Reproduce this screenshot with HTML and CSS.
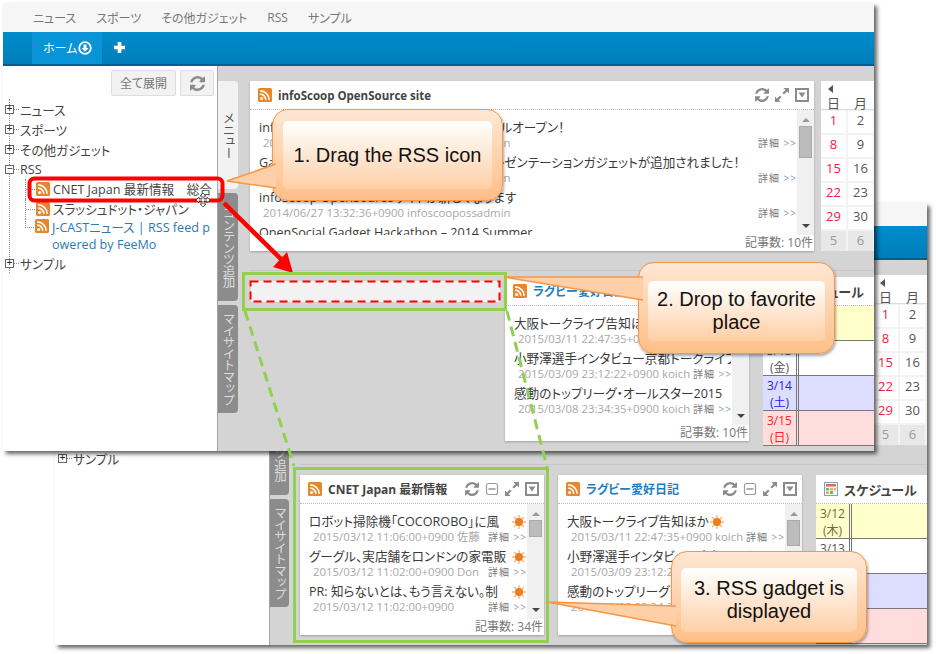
FILE: index.html
```html
<!DOCTYPE html>
<html lang="ja">
<head>
  <meta charset="UTF-8" />
  <title>infoScoop RSS gadget</title>
  <link rel="stylesheet" href="styles.css">
</head>
<body>

  <svg class="defs" aria-hidden="true">
    <symbol id="rss" viewBox="0 0 14 14">
      <rect width="14" height="14" rx="1.5" fill="#e8862e"/>
      <circle cx="3.6" cy="10.4" r="1.5" fill="#fff"/>
      <path d="M2.2 6.2a5.6 5.6 0 0 1 5.6 5.6M2.2 2.9a8.9 8.9 0 0 1 8.9 8.9" fill="none" stroke="#fff" stroke-width="1.7"/>
    </symbol>
    <symbol id="reload" viewBox="0 0 1536 1536">
      <path fill="#8b8b8b" d="M1511 928q0 5-1 7-64 268-268 434.5t-478 166.5q-146 0-282.5-55t-243.5-157l-129 129q-19 19-45 19t-45-19-19-45v-448q0-26 19-45t45-19h448q26 0 45 19t19 45-19 45l-137 137q71 66 161 102t187 36q134 0 250-65t186-179q11-17 53-117 8-23 30-23h192q13 0 22.5 9.5t9.5 22.5zm25-800v448q0 26-19 45t-45 19h-448q-26 0-45-19t-19-45 19-45l138-138q-148-137-349-137-134 0-250 65t-186 179q-11 17-53 117-8 23-30 23h-199q-13 0-22.5-9.5t-9.5-22.5v-7q65-268 270-434.5t480-166.5q146 0 284 55.5t245 156.5l130-129q19-19 45-19t45 19 19 45z"/>
    </symbol>
    <symbol id="expand" viewBox="0 0 14 14">
      <path fill="#8b8b8b" d="M8.4 0H14v5.6l-2-2-3 3-1.600-1.600 3-3zM5.600 14H0V8.400l2 2 3-3 1.600 1.600-3 3z"/>
    </symbol>
    <symbol id="menu" viewBox="0 0 14 14">
      <rect x="1" y="1" width="12" height="12" fill="#fff" stroke="#8b8b8b" stroke-width="2"/>
      <path fill="#8b8b8b" d="M3.500 4.500h7L7 9.500z"/>
    </symbol>
    <symbol id="minimize" viewBox="0 0 13 14">
      <rect x="1" y="1.500" width="11" height="11" rx="2" fill="#fff" stroke="#9a9a9a" stroke-width="1.200"/>
      <path d="M3 7h7" stroke="#8b8b8b" stroke-width="1.400"/>
    </symbol>
    <symbol id="sun" viewBox="0 0 14 14">
      <path d="M7 0v14M0 7h14M2 2l10 10M12 2L2 12" stroke="#f7b27a" stroke-width="1.300"/>
      <circle cx="7" cy="7" r="4" fill="#ee7d1c"/>
    </symbol>
    <symbol id="calendar" viewBox="0 0 14 14">
      <rect x=".5" y=".5" width="13" height="13" fill="#f4f8fc" stroke="#7ba3c9"/>
      <rect x="2" y="2" width="10" height="2.500" fill="#d66"/>
      <path fill="#7fb46a" d="M2 6h3v2.500H2zM6 9h3v3H6z"/>
      <path fill="#e2b34c" d="M6 6h3v2.500H6zM10 6h2v2.500h-2zM2 9.500h3V12H2z"/>
    </symbol>
  </svg>

  <div class="canvas">

    <!-- back window: the gadget after it was dropped -->
    <div class="window window-back">
      <div class="topnav"></div>
      <div class="tabbar"></div>
      <div class="content">
        <div class="side">
          <ul class="tree tree-back">
            <li class="tree-row"><span class="toggle">+</span><span class="dots"></span>サンプル</li>
          </ul>
        </div>
        <div class="tabs tabs-back">
          <div class="tab tab-light">メニュー</div>
          <div class="tab">コンテンツ追加</div>
          <div class="tab">マイサイトマップ</div>
        </div>
        <div class="main main-back">
          <div class="row-upper row-end">
            <div class="cal">
              <div class="cal-nav"><span class="arrow-left"></span></div>
              <div class="cal-head">日</div><div class="cal-head">月</div>
              <div class="cal-day sun-day">1</div><div class="cal-day">2</div>
              <div class="cal-day sun-day">8</div><div class="cal-day">9</div>
              <div class="cal-day sun-day">15</div><div class="cal-day">16</div>
              <div class="cal-day sun-day">22</div><div class="cal-day">23</div>
              <div class="cal-day sun-day">29</div><div class="cal-day">30</div>
              <div class="cal-day cal-off">5</div><div class="cal-day cal-off">6</div>
            </div>
          </div>
          <div class="row-lower row-lower-back">
            <div class="gadget gadget-small">
              <div class="gadget-head">
                <svg class="ico"><use href="#rss"/></svg>
                <span class="gadget-title">CNET Japan 最新情報</span>
                <span class="actions">
                  <svg class="act"><use href="#reload"/></svg>
                  <svg class="act"><use href="#minimize"/></svg>
                  <svg class="act"><use href="#expand"/></svg>
                  <svg class="act"><use href="#menu"/></svg>
                </span>
              </div>
              <div class="gadget-body">
                <div class="items">
                  <div class="item">
                    <div class="item-title"><span class="title-text">ロボット掃除機「COCOROBO」に風</span><svg class="sun"><use href="#sun"/></svg></div>
                    <div class="item-meta"><span class="meta-text">2015/03/12 11:06:00+0900 佐藤</span><span class="more">詳細 <b>&gt;&gt;</b></span></div>
                  </div>
                  <div class="item">
                    <div class="item-title"><span class="title-text">グーグル、実店舗をロンドンの家電販</span><svg class="sun"><use href="#sun"/></svg></div>
                    <div class="item-meta"><span class="meta-text">2015/03/12 11:02:00+0900 Don</span><span class="more">詳細 <b>&gt;&gt;</b></span></div>
                  </div>
                  <div class="item">
                    <div class="item-title"><span class="title-text">PR: 知らないとは、もう言えない。制</span><svg class="sun"><use href="#sun"/></svg></div>
                    <div class="item-meta"><span class="meta-text">2015/03/12 11:02:00+0900</span><span class="more">詳細 <b>&gt;&gt;</b></span></div>
                  </div>
                </div>
                <div class="scroll"><span class="arrow-up"></span><span class="thumb thumb-s"></span><span class="arrow-down"></span></div>
              </div>
              <div class="gadget-foot">記事数: 34件</div>
            </div>
            <div class="gadget gadget-small">
              <div class="gadget-head">
                <svg class="ico"><use href="#rss"/></svg>
                <span class="gadget-title gadget-link">ラグビー愛好日記</span>
                <span class="actions">
                  <svg class="act"><use href="#reload"/></svg>
                  <svg class="act"><use href="#minimize"/></svg>
                  <svg class="act"><use href="#expand"/></svg>
                  <svg class="act"><use href="#menu"/></svg>
                </span>
              </div>
              <div class="gadget-body">
                <div class="items">
                  <div class="item">
                    <div class="item-title"><span>大阪トークライブ告知ほか</span><svg class="sun sun-inline"><use href="#sun"/></svg></div>
                    <div class="item-meta"><span class="meta-text">2015/03/11 22:47:35+0900 koich</span><span class="more">詳細 <b>&gt;&gt;</b></span></div>
                  </div>
                  <div class="item">
                    <div class="item-title"><span class="title-text">小野澤選手インタビュー京都トークライブ</span></div>
                    <div class="item-meta"><span class="meta-text">2015/03/09 23:12:22+0900 koich</span><span class="more">詳細 <b>&gt;&gt;</b></span></div>
                  </div>
                  <div class="item">
                    <div class="item-title"><span class="title-text">感動のトップリーグ・オールスター2015</span></div>
                    <div class="item-meta"><span class="meta-text">2015/03/08 23:34:35+0900 koich</span><span class="more">詳細 <b>&gt;&gt;</b></span></div>
                  </div>
                </div>
                <div class="scroll"><span class="arrow-up"></span><span class="thumb thumb-m"></span><span class="arrow-down"></span></div>
              </div>
              <div class="gadget-foot">記事数: 10件</div>
            </div>
            <div class="schedule schedule-back">
              <div class="gadget-head">
                <svg class="ico"><use href="#calendar"/></svg>
                <span class="gadget-title">スケジュール</span>
                <span class="diamond"></span>
              </div>
              <div class="sch-row sch-today"><div class="sch-date">3/12<br>(木)</div></div>
              <div class="sch-row"><div class="sch-date">3/13<br>(金)</div></div>
              <div class="sch-row sch-sat"><div class="sch-date">3/14<br>(土)</div></div>
              <div class="sch-row sch-sun"><div class="sch-date">3/15<br>(日)</div></div>
            </div>
          </div>
        </div>
      </div>
    </div>

    <!-- front window: dragging from the menu tree -->
    <div class="window window-front">
      <nav class="topnav topnav-front">
        <a>ニュース</a><a>スポーツ</a><a>その他ガジェット</a><a>RSS</a><a>サンプル</a>
      </nav>
      <div class="tabbar">
        <div class="home-tab">ホーム<svg class="home-ico" viewBox="0 0 14 14"><circle cx="7" cy="7" r="5.800" fill="none" stroke="#fff" stroke-width="1.800"/><path d="M5.500 3.500h3V7h2L7 10.800 3.500 7h2z" fill="#fff"/></svg></div>
        <svg class="plus" viewBox="0 0 14 14"><path d="M5 1h4v4h4v4H9v4H5V9H1V5h4z" fill="#fff"/></svg>
      </div>
      <div class="content">
        <div class="side">
          <div class="side-buttons">
            <button class="btn">全て展開</button>
            <button class="btn btn-icon"><svg class="btn-ico"><use href="#reload"/></svg></button>
          </div>
          <ul class="tree">
            <li class="tree-row"><span class="toggle">+</span><span class="dots"></span>ニュース</li>
            <li class="tree-row"><span class="toggle">+</span><span class="dots"></span>スポーツ</li>
            <li class="tree-row"><span class="toggle">+</span><span class="dots"></span>その他ガジェット</li>
            <li class="tree-row"><span class="toggle">&minus;</span><span class="dots"></span>RSS</li>
            <li>
              <ul class="subtree">
                <li class="tree-row"><span class="dots dots-sub"></span><svg class="ico"><use href="#rss"/></svg><span class="node">CNET Japan 最新情報　総合</span></li>
                <li class="tree-row"><span class="dots dots-sub"></span><svg class="ico"><use href="#rss"/></svg><span class="node">スラッシュドット・ジャパン</span></li>
                <li class="tree-row tree-row-wrap"><span class="dots-elbow"></span><svg class="ico"><use href="#rss"/></svg><span class="node node-link">J-CASTニュース | RSS feed powered by FeeMo</span></li>
              </ul>
            </li>
            <li class="tree-row"><span class="toggle">+</span><span class="dots"></span>サンプル</li>
          </ul>
        </div>
        <div class="tabs">
          <div class="tab tab-light">メニュー</div>
          <div class="tab">コンテンツ追加</div>
          <div class="tab">マイサイトマップ</div>
        </div>
        <div class="main">
          <div class="row-upper">
            <div class="gadget gadget-wide">
              <div class="gadget-head">
                <svg class="ico"><use href="#rss"/></svg>
                <span class="gadget-title">infoScoop OpenSource site</span>
                <span class="actions">
                  <svg class="act"><use href="#reload"/></svg>
                  <svg class="act"><use href="#expand"/></svg>
                  <svg class="act"><use href="#menu"/></svg>
                </span>
              </div>
              <div class="gadget-body">
                <div class="items">
                  <div class="item">
                    <div class="item-title"><span class="title-text">infoScoop OpenSource サイトを リニューアルオープン！</span></div>
                    <div class="item-meta"><span class="meta-text">2014/07/01 10:11:26+0900 infoscoopossadmin</span><span class="more">詳細 <b>&gt;&gt;</b></span></div>
                  </div>
                  <div class="item">
                    <div class="item-title"><span class="title-text">Gadget Hackathonで Gadget Galleryにプレゼンテーションガジェットが追加されました！</span></div>
                    <div class="item-meta"><span class="meta-text">2014/06/30 17:20:14+0900 infoscoopossadmin</span><span class="more">詳細 <b>&gt;&gt;</b></span></div>
                  </div>
                  <div class="item">
                    <div class="item-title"><span class="title-text">infoScoop OpenSourceサイトが新しくなります</span></div>
                    <div class="item-meta"><span class="meta-text">2014/06/27 13:32:36+0900 infoscoopossadmin</span><span class="more">詳細 <b>&gt;&gt;</b></span></div>
                  </div>
                  <div class="item">
                    <div class="item-title"><span class="title-text">OpenSocial Gadget Hackathon – 2014 Summer</span></div>
                  </div>
                </div>
                <div class="scroll"><span class="arrow-up"></span><span class="thumb thumb-l"></span><span class="arrow-down"></span></div>
              </div>
              <div class="gadget-foot">記事数: 10件</div>
            </div>
            <div class="cal">
              <div class="cal-nav"><span class="arrow-left"></span></div>
              <div class="cal-head">日</div><div class="cal-head">月</div>
              <div class="cal-day sun-day">1</div><div class="cal-day">2</div>
              <div class="cal-day sun-day">8</div><div class="cal-day">9</div>
              <div class="cal-day sun-day">15</div><div class="cal-day">16</div>
              <div class="cal-day sun-day">22</div><div class="cal-day">23</div>
              <div class="cal-day sun-day">29</div><div class="cal-day">30</div>
              <div class="cal-day cal-off">5</div><div class="cal-day cal-off">6</div>
            </div>
          </div>
          <div class="row-lower">
            <div class="dropzone"></div>
            <div class="gadget gadget-medium">
              <div class="gadget-head">
                <svg class="ico"><use href="#rss"/></svg>
                <span class="gadget-title gadget-link">ラグビー愛好日記</span>
              </div>
              <div class="gadget-body">
                <div class="items">
                  <div class="item">
                    <div class="item-title"><span class="title-text">大阪トークライブ告知ほか</span></div>
                    <div class="item-meta"><span class="meta-text">2015/03/11 22:47:35+0900 koich</span><span class="more">詳細 <b>&gt;&gt;</b></span></div>
                  </div>
                  <div class="item">
                    <div class="item-title"><span class="title-text">小野澤選手インタビュー京都トークライブ</span></div>
                    <div class="item-meta"><span class="meta-text">2015/03/09 23:12:22+0900 koich</span><span class="more">詳細 <b>&gt;&gt;</b></span></div>
                  </div>
                  <div class="item">
                    <div class="item-title"><span class="title-text">感動のトップリーグ・オールスター2015</span></div>
                    <div class="item-meta"><span class="meta-text">2015/03/08 23:34:35+0900 koich</span><span class="more">詳細 <b>&gt;&gt;</b></span></div>
                  </div>
                </div>
                <div class="scroll"><span class="arrow-up"></span><span class="thumb thumb-m"></span><span class="arrow-down"></span></div>
              </div>
              <div class="gadget-foot">記事数: 10件</div>
            </div>
            <div class="schedule">
              <div class="gadget-head">
                <svg class="ico"><use href="#calendar"/></svg>
                <span class="gadget-title">スケジュール</span>
                <span class="diamond"></span>
              </div>
              <div class="sch-row sch-today"><div class="sch-date">3/12<br>(木)</div></div>
              <div class="sch-row"><div class="sch-date">3/13<br>(金)</div></div>
              <div class="sch-row sch-sat"><div class="sch-date">3/14<br>(土)</div></div>
              <div class="sch-row sch-sun"><div class="sch-date">3/15<br>(日)</div></div>
            </div>
          </div>
        </div>
      </div>
    </div>

    <!-- annotations drawn over both windows -->
    <svg class="marks" viewBox="0 0 936 654">
      <rect x="29.500" y="178.500" width="193" height="22" rx="5" fill="none" stroke="#f00" stroke-width="4"/>
      <path d="M224 203l62 61" stroke="#f00" stroke-width="4.500" fill="none"/>
      <path d="M293 273l-20-6 14-15z" fill="#f00"/>
      <rect x="250.500" y="281.500" width="249" height="20" fill="none" stroke="#f00" stroke-width="2" stroke-dasharray="8 5"/>
      <rect x="243.500" y="273.500" width="262" height="36" fill="none" stroke="#92d050" stroke-width="3"/>
      <path d="M245 311l49 155M507 311l40 156" fill="none" stroke="#92d050" stroke-width="3" stroke-dasharray="10 6"/>
      <rect x="294.500" y="468.500" width="253" height="173" fill="none" stroke="#92d050" stroke-width="3"/>
      <path d="M203 193l-3 3h2v3h-3v-2l-3 3 3 3v-2h3v3h-2l3 3 3-3h-2v-3h3v2l3-3-3-3v2h-3v-3h2z" fill="#fff" stroke="#333" stroke-width=".8"/>
    </svg>

    <div class="callout callout-one">
      <svg class="tail tail-one" viewBox="0 0 50 30"><path d="M50 1L1 18l49 7" /></svg>
      <div class="callout-inner">1. Drag the RSS icon</div>
    </div>
    <div class="callout callout-two">
      <svg class="tail tail-two" viewBox="0 0 140 30"><path d="M140 1H1l139 23" /></svg>
      <div class="callout-inner">2. Drop to favorite place</div>
    </div>
    <div class="callout callout-three">
      <svg class="tail tail-three" viewBox="0 0 130 30"><path d="M130 5L1 1l129 24" /></svg>
      <div class="callout-inner">3. RSS gadget is displayed</div>
    </div>

  </div>

</body>
</html>
```

FILE: styles.css
```css
:root {
  --gray-bg: #d4d4d4;
  --text: #3a3a3a;
  --meta: #a8a8a8;
}

* {
  box-sizing: border-box;
  margin: 0;
  padding: 0;
}

body {
  background: #fff;
  color: var(--text);
  font-family: "Open Sans", "Noto Sans CJK JP", sans-serif;
  font-size: 12.6px;
  font-feature-settings: "palt";
}

ul {
  list-style: none;
}

.defs {
  position: absolute;
  width: 0;
  height: 0;
}

.canvas {
  position: relative;
  width: 936px;
  height: 654px;
  overflow: hidden;
}

.window {
  position: absolute;
  display: flex;
  flex-direction: column;
  overflow: hidden;
  background: #fff;
  box-shadow: 3px 3px 4px rgba(0,0,0,0.6);
}

.window-front {
  left: 3px;
  top: 3px;
  width: 871px;
  height: 448px;
}

.window-back {
  left: 55px;
  top: 203px;
  width: 872px;
  height: 442px;
}

.topnav {
  background: #f6f6f6;
  height: 23px;
  flex: none;
}

.topnav-front {
  height: 29px;
  display: flex;
  align-items: center;
  gap: 20px;
  padding-left: 30px;
  font-size: 12px;
}

.topnav-front a {
  color: #777;
}

.tabbar {
  display: flex;
  align-items: stretch;
  flex: none;
  height: 34px;
  background: linear-gradient(#008ccc, #007db9);
  border-bottom: 2px solid #005f8e;
}

.home-tab {
  display: flex;
  align-items: center;
  margin-left: 29px;
  padding: 0 8px 0 11px;
  gap: 1px;
  width: 70px;
  background: #0a94d8;
  color: #fff;
  font-size: 12px;
}

.home-ico {
  width: 14px;
  height: 14px;
}

.plus {
  width: 13px;
  height: 13px;
  margin: 9px 0 0 11px;
}

.content {
  flex: 1;
  display: flex;
  background: var(--gray-bg);
  min-height: 0;
}

.side {
  flex: none;
  width: 215px;
  background: #fff;
  border-right: 1px solid #a5a5a5;
}

.side-buttons {
  display: flex;
  justify-content: flex-end;
  gap: 4px;
  padding: 4px 3px 0 0;
  margin-bottom: 3px;
}

.btn {
  height: 26px;
  width: 65px;
  background: #f2f2f2;
  border: 1px solid #ddd;
  border-radius: 2px;
  color: #777;
  font: inherit;
  font-size: 12px;
}

.btn-icon {
  width: 34px;
  display: flex;
  align-items: center;
  justify-content: center;
}

.btn-ico {
  width: 15px;
  height: 15px;
}

.tree {
  margin-left: 6px;
  border-left: 1px dotted #888;
  color: #444;
}

.tree-back {
  margin: 188px 0 0 8px;
  border-left: 0;
}

.tree-row {
  display: flex;
  align-items: center;
  height: 20px;
  white-space: nowrap;
}

.toggle {
  flex: none;
  width: 9px;
  height: 9px;
  margin-left: -5px;
  border: 1px solid #666;
  background: #fff;
  font: 10px/7px "Liberation Mono", monospace;
  text-align: center;
  color: #222;
}

.dots {
  width: 5px;
  margin: 0 1px 0 0;
  border-top: 1px dotted #888;
}

.subtree {
  margin-left: 15px;
}

.subtree .tree-row {
  border-left: 1px dotted #888;
}

.dots-sub {
  width: 9px;
}

.dots-elbow {
  flex: none;
  width: 9px;
  height: 9px;
  margin-right: 1px;
  border-bottom: 1px dotted #888;
  border-left: 1px dotted #888;
}

.subtree .tree-row-wrap {
  height: 34px;
  align-items: flex-start;
  white-space: normal;
  border-left: 0;
}

.ico {
  flex: none;
  width: 14px;
  height: 14px;
}

.node {
  margin-left: 3px;
  line-height: 17px;
}

.node-link {
  width: 165px;
  word-break: break-all;
  color: #2a7ab8;
}

.tabs {
  flex: none;
  width: 20px;
  padding-top: 15px;
  display: flex;
  flex-direction: column;
  gap: 4px;
}

.tabs-back {
  width: 19px;
}

.tab {
  flex: none;
  height: 108px;
  display: flex;
  align-items: center;
  justify-content: center;
  writing-mode: vertical-rl;
  background: #8c8c8c;
  color: #ddd;
  border-radius: 0 4px 4px 0;
  font-size: 12.5px;
  font-feature-settings: normal;
  letter-spacing: -1px;
}

.tab-light {
  background: #f2f2f2;
  color: #555;
}

.main {
  flex: 1;
  min-width: 0;
  padding: 15px 0 0 12px;
}

.main-back {
  padding-left: 11px;
}

.row-upper {
  display: flex;
  gap: 7px;
  height: 170px;
}

.row-end {
  justify-content: flex-end;
}

.row-lower {
  display: flex;
  margin-top: 19px;
  padding-top: 6px;
  border-top: 1px solid #c6c6c6;
  gap: 14px;
}

.row-lower-back {
  padding-top: 10px;
}

.gadget,
.schedule {
  flex: none;
  background: #fff;
  display: flex;
  flex-direction: column;
}

.gadget {
  box-shadow: 0 1px 2px rgba(0,0,0,0.25);
}

.gadget-wide {
  width: 564px;
  height: 170px;
}

.gadget-medium {
  width: 244px;
  height: 164px;
}

.gadget-small {
  width: 244px;
  height: 160px;
}

.gadget-head {
  display: flex;
  align-items: center;
  flex: none;
  height: 29px;
  padding: 0 5px 0 8px;
  gap: 6px;
  border-bottom: 1px dotted #bbb;
}

.gadget-title {
  font-size: 11.5px;
  font-weight: bold;
  color: #444;
  white-space: nowrap;
}

.gadget-small .gadget-title,
.gadget-medium .gadget-title {
  font-size: 12px;
}

.gadget-link {
  color: #1f7ec2;
}

.gadget-small .gadget-link,
.gadget-medium .gadget-link {
  color: #1f7ec2;
}

.actions {
  display: flex;
  align-items: center;
  gap: 6px;
  margin-left: auto;
}

.act {
  width: 14px;
  height: 14px;
}

.gadget-body {
  flex: 1;
  display: flex;
  min-height: 0;
}

.items {
  flex: 1;
  min-width: 0;
  overflow: hidden;
  padding: 10px 0 0 9px;
}

.item {
  height: 35px;
}

.item-title {
  display: flex;
  align-items: center;
  height: 16px;
  line-height: 16px;
  white-space: nowrap;
  padding-right: 1px;
}

.title-text {
  flex: 1;
  min-width: 0;
  overflow: hidden;
}

.sun {
  flex: none;
  width: 14px;
  height: 14px;
  margin-left: 4px;
}

.sun-inline {
  margin-left: 1px;
}

.item-meta {
  display: flex;
  height: 14px;
  line-height: 14px;
  padding-left: 4px;
  font-size: 11.4px;
  color: var(--meta);
  white-space: nowrap;
}

.meta-text {
  flex: 1;
  min-width: 0;
  overflow: hidden;
}

.more {
  flex: none;
  font-size: 10px;
  letter-spacing: 1px;
  color: #777;
  padding-left: 2px;
}

.more b {
  font-weight: normal;
  color: #8aa0b4;
}

.scroll {
  flex: none;
  width: 17px;
  background: #f0f0f0;
  display: flex;
  flex-direction: column;
  align-items: center;
  padding: 8px 0 7px;
}

.arrow-up,
.arrow-down {
  width: 0;
  height: 0;
  border-left: 4px solid transparent;
  border-right: 4px solid transparent;
}

.arrow-up {
  border-bottom: 4px solid #999;
}

.arrow-down {
  margin-top: auto;
  border-top: 4px solid #444;
}

.thumb {
  width: 13px;
  margin-top: 4px;
  background: #bcbcbc;
  border: 1px solid #aaa;
}

.thumb-s {
  height: 17px;
}

.thumb-m {
  height: 26px;
}

.thumb-l {
  height: 32px;
}

.gadget-foot {
  flex: none;
  height: 16px;
  line-height: 16px;
  padding-right: 1px;
  text-align: right;
  font-size: 12px;
  color: #777;
}

.cal {
  flex: none;
  width: 54px;
  height: 170px;
  display: grid;
  grid-template-columns: 27px 27px;
  grid-template-rows: 15px 14px;
  grid-auto-rows: 24px;
  overflow: hidden;
  background: #f3f3f3;
  text-align: center;
  font-size: 13px;
}

.cal-nav {
  grid-column: span 2;
  height: 15px;
  background: #fff;
  padding: 4px 0 0 7px;
  text-align: left;
}

.arrow-left {
  display: block;
  width: 0;
  height: 0;
  border-top: 4px solid transparent;
  border-bottom: 4px solid transparent;
  border-right: 5px solid #555;
}

.cal-head {
  background: #fff;
  border-bottom: 1px solid #ddd;
  padding-right: 2px;
  line-height: 14px;
  color: #555;
}

.cal-day {
  margin: 1px 2px 1px 0;
  background: #fff;
  line-height: 18px;
  color: #555;
}

.sun-day {
  color: #f0203c;
}

.cal-off {
  background: #e8e8e8;
  color: #999;
}

.dropzone {
  flex: none;
  width: 249px;
  height: 21px;
  margin: 4px -9px 0 1px;
  background: #f2f2f2;
}

.schedule {
  width: 111px;
  overflow: hidden;
}

.schedule-back {
  width: 125px;
}

.schedule .gadget-title {
  font-size: 13px;
}

.diamond {
  flex: none;
  width: 6px;
  height: 6px;
  margin-left: 7px;
  transform: rotate(45deg);
  background: #6aa3dd;
}

.sch-row {
  flex: none;
  height: 35px;
  border-bottom: 1px solid #777;
}

.sch-date {
  width: 36px;
  height: 100%;
  border-right: 3px double #777;
  padding-top: 1px;
  line-height: 17px;
  text-align: center;
  font-size: 12px;
  background: #fff;
  color: #555;
}

.sch-today {
  background: #ffc;
}

.sch-today .sch-date {
  background: #ffc;
  color: #6e6a3a;
}

.sch-sat,
.sch-sat .sch-date {
  background: #ddf;
  color: #22f;
}

.sch-sun,
.sch-sun .sch-date {
  background: #fdd;
  color: #f22;
}

.marks {
  position: absolute;
  left: 0;
  top: 0;
  width: 936px;
  height: 654px;
  pointer-events: none;
}

.callout {
  position: absolute;
  padding: 11px 10px;
  background: linear-gradient(#ffe7d3, #ffbf88);
  border: 1.5px solid #f79646;
  border-radius: 16px;
  box-shadow: 1px 2px 3px rgba(0,0,0,0.35);
  font: 20px/23px "Liberation Sans", sans-serif;
  color: #111;
}

.callout-inner {
  position: relative;
  display: flex;
  align-items: center;
  justify-content: center;
  height: 100%;
  padding: 0 6px;
  text-align: center;
  background: linear-gradient(#fff, #ffcfa6);
  border-radius: 5px;
}

.callout-one {
  left: 272px;
  top: 109px;
  width: 231px;
  height: 92px;
}

.callout-two {
  left: 638px;
  top: 262px;
  width: 197px;
  height: 92px;
  padding: 18px 9px 12px;
}

.callout-three {
  left: 671px;
  top: 551px;
  width: 196px;
  height: 92px;
  padding: 16px 9px 10px;
}

.tail {
  position: absolute;
  overflow: visible;
}

.tail path {
  fill: #ffd0a8;
  stroke: #f79646;
  stroke-width: 1.5;
}

.tail-one {
  left: -47px;
  top: 53px;
  width: 50px;
  height: 30px;
}

.tail-two {
  left: -136px;
  top: 13px;
  width: 140px;
  height: 30px;
}

.tail-three {
  left: -126px;
  top: 49px;
  width: 130px;
  height: 30px;
}
```
